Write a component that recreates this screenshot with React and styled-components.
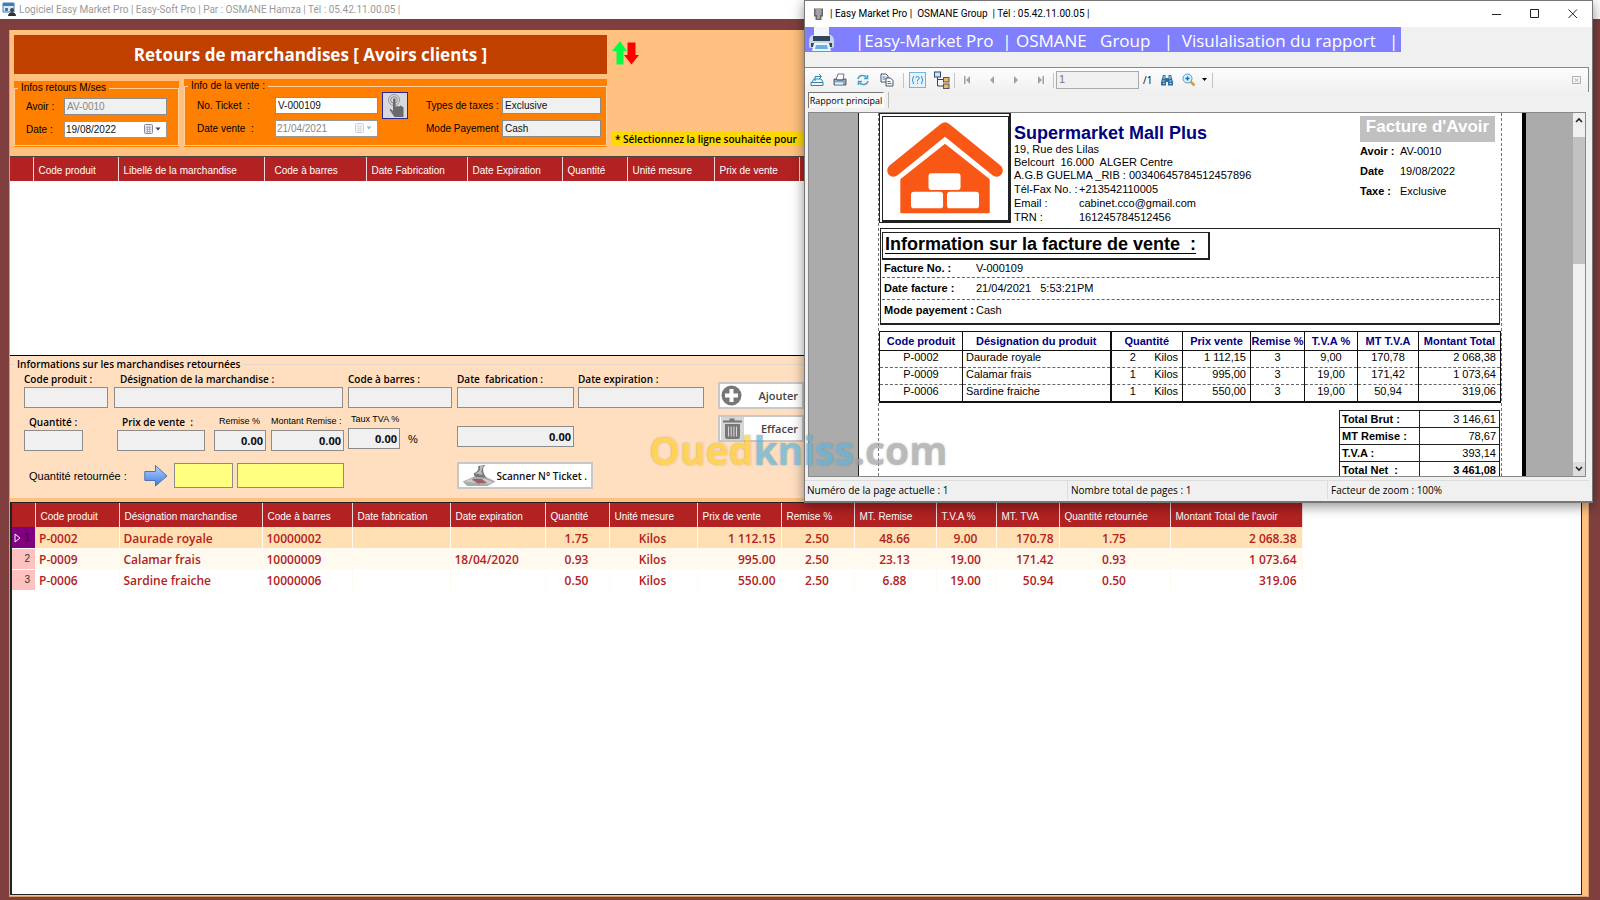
import { useState } from 'react'
import styled, { createGlobalStyle } from 'styled-components'

const ui = '"Open Sans", "Noto Sans", sans-serif'
const caption = 'Roboto, "Open Sans", sans-serif'
const sans = '"Liberation Sans", Arial, sans-serif'

const GlobalStyle = createGlobalStyle`
    * { box-sizing: border-box; }
    body { margin: 0; background: #7f3f3f; font-family: ${sans}; font-size: 11px; color: #000; }
    input, button { font-family: inherit; font-size: inherit; color: inherit; margin: 0; border-radius: 0; }
    table { border-collapse: collapse; table-layout: fixed; }
    fieldset { margin: 0; padding: 0; min-width: 0; }
`

/* ---------- main form ---------- */

const Desktop = styled.div`
    position: relative;
    min-height: 100vh;
    display: flex;
    flex-direction: column;
    overflow: hidden;
`

const AppTitle = styled.header`
    display: flex;
    align-items: center;
    gap: 3px;
    height: 19px;
    padding-left: 2px;
    background: #fff;
    color: #999;
    font: 10px/18px ${caption};
    white-space: pre;
`

const Form = styled.main`
    flex: 1;
    display: flex;
    flex-direction: column;
    margin: 11px 11px 3px 9px;
    border: 1px solid #d9a066;
    border-top: 0;
    background: #ffc080;
`

const FormHead = styled.section`
    display: flex;
    gap: 5px;
    height: 126px;
    padding: 5px 4px 0;
`

const HeadLeft = styled.div`
    display: flex;
    flex-direction: column;
    width: 593px;
    gap: 5px;
`

const Banner = styled.h1`
    margin: 0;
    height: 39px;
    background: #c04000;
    color: #fff;
    font: 700 17px/40px ${ui};
    text-align: center;
    white-space: pre;
`

const Groups = styled.div`
    display: grid;
    grid-template-columns: 165px 1fr;
    align-items: end;
    gap: 5px;
`

const Group = styled.div`
    background: #ff8000;
    padding-bottom: 1px;
`

const GroupBox = styled.fieldset`
    border: 1px solid #ffd0a0;
    legend {
        margin-left: 3px;
        padding: 0 3px;
        font-size: 10px;
        line-height: 14px;
        white-space: pre;
    }
`

const GroupGrid = styled.div`
    display: grid;
    grid-template-columns: ${p => p.$cols};
    grid-template-rows: 18px 17px;
    row-gap: 6px;
    align-items: center;
    padding: ${p => p.$pad};
    font-size: 10px;
    white-space: pre;
`

const TextBox = styled.input`
    width: 100%;
    height: ${p => p.$h || 17}px;
    padding: 0 2px;
    border: 1px solid #8c8c8c;
    outline: 0;
    background: ${p => p.$bg || '#f0f0f0'};
    color: ${p => p.$color || '#111'};
    font-family: ${p => p.$ui ? ui : sans};
    font-weight: ${p => p.$bold ? 700 : 400};
    text-align: ${p => p.$right ? 'right' : 'left'};
`

const DateBox = styled.div`
    display: flex;
    align-items: center;
    height: 17px;
    padding-right: 5px;
    border: 1px solid #999;
    background: #fff;
    input { flex: 1; min-width: 0; border: 0; padding: 0 1px; background: none; outline: 0; color: ${p => p.$off ? '#888' : '#111'}; }
    svg { opacity: ${p => p.$off ? .4 : 1}; }
`

const PickButton = styled.button`
    grid-area: 1 / 4;
    align-self: start;
    width: 26px;
    height: 27px;
    margin-top: -4px;
    padding: 0;
    border: 1px solid #2a2a90;
    background: #d8d8e0;
`

const HeadRight = styled.div`
    flex: 1;
    display: flex;
    flex-direction: column;
    justify-content: space-between;
    align-items: flex-start;
    padding: 6px 0 10px;
`

const Note = styled.div`
    width: 220px;
    padding-left: 3px;
    background: #ffd800;
    font: 600 10px/14px ${ui};
    white-space: nowrap;
`

const HeadGrid = styled.div`
    height: 200px;
    border-top: 1px solid #444;
    border-bottom: 1px solid #000;
    background: #fff;
`

const Th = styled.th`
    padding: 2px 0 0 ${p => p.$pad || 5}px;
    overflow: hidden;
    background: #b22222;
    border-right: 1px solid #f3d9d9;
    color: #fff;
    font-size: 10px;
    font-weight: 400;
    text-align: left;
    white-space: nowrap;
`

const SourceTable = styled.table`
    width: 100%;
    tr { height: 24px; }
`

/* ---------- returned goods ---------- */

const Returned = styled.section`
    height: 142px;
    padding-top: 1px;
    background: #ffdfc0;
`

const ReturnedBox = styled.fieldset`
    border: 0;
    border-top: 1px solid #e6d5c8;
    legend {
        margin-left: 5px;
        padding: 0 2px;
        font: 600 10px/15px ${ui};
    }
`

const ReturnedBody = styled.div`
    display: flex;
    gap: 14px;
    padding-left: 14px;
`

const Rows = styled.div`
    display: flex;
    flex-direction: column;
    width: 680px;
`

const FieldRow = styled.div`
    display: grid;
    grid-template-columns: ${p => p.$cols};
    align-items: end;
    height: ${p => p.$h}px;
`

const FieldWrap = styled.div`
    display: flex;
    flex-direction: column;
    margin-bottom: ${p => p.$up || 0}px;
    label {
        padding-left: ${p => p.$indent || 0}px;
        font: ${p => p.$small ? `9px/18px ${sans}` : `600 10px/15px ${ui}`};
        white-space: pre;
    }
`

const Percent = styled.span`
    margin-bottom: 6px;
    padding-left: 8px;
    font-size: 11px;
`

const ReturnRow = styled.div`
    display: grid;
    grid-template-columns: 120px 30px 59px 4px 107px 113px 137px;
    align-items: center;
    height: 37px;
    padding-top: 11px;
    label { padding-left: 5px; font-size: 11px; }
`

const Actions = styled.div`
    display: flex;
    flex-direction: column;
    gap: 6px;
    padding-top: 10px;
`

const ActionButton = styled.button`
    display: flex;
    align-items: center;
    justify-content: space-between;
    width: ${p => p.$w || 86}px;
    height: 27px;
    padding: 0 4px 0 1px;
    border: 2px solid #c8c8c8;
    background: #fff;
    color: ${p => p.$w ? '#111' : '#444'};
    font: 600 ${p => p.$w ? 10 : 11}px ${ui};
    white-space: nowrap;
`

const GridPanel = styled.section`
    flex: 1;
    margin: 4px 6px 1px 0;
    border: 1px solid #222;
    border-width: 1px 1px 1px 2px;
    background: #fff;
`

const ReturnTable = styled.table`
    width: 1290px;
    thead tr { height: 24px; }
    tbody tr { height: 21px; background: #fff; }
    tbody tr:nth-child(1) { background: #ffe0b3; }
    tbody tr:nth-child(2) { background: #fffaf0; }
    tbody th {
        padding: 0 5px 0 2px;
        background: #ffc0c0;
        border-bottom: 1px solid #fff;
        color: #333;
        font-size: 10px;
        font-weight: 400;
        text-align: right;
    }
    tbody tr:nth-child(1) th { background: #800080; color: #400040; }
`

const Td = styled.td`
    padding: 2px 5px 0 4px;
    border-right: 1px solid #fff9ef;
    color: #b22222;
    font: 600 12px/19px ${ui};
    text-align: ${p => p.$align || 'left'};
    white-space: nowrap;
`

const Marker = styled.svg`
    float: left;
    margin-top: 1px;
`

/* ---------- report window ---------- */

const Win = styled.section`
    position: absolute;
    top: 0;
    right: 7px;
    display: flex;
    flex-direction: column;
    width: 789px;
    height: 503px;
    border: 1px solid #777;
    border-bottom-width: 2px;
    background: #f0f0f0;
    box-shadow: 0 3px 12px rgba(0, 0, 0, .45);
`

const WinTitle = styled.header`
    display: flex;
    align-items: center;
    height: 26px;
    padding-left: 8px;
    background: #fff;
    font: 10px/24px ${caption};
    white-space: pre;
    span { flex: 1; padding-left: 6px; }
`

const WinButton = styled.button`
    display: flex;
    align-items: center;
    justify-content: center;
    width: 38px;
    height: 24px;
    padding: 0;
    border: 0;
    background: none;
`

const Band = styled.div`
    display: flex;
    width: 596px;
    height: 25px;
    padding-left: 3px;
    background: #8080ff;
    color: #fff;
    font: 17px/28px ${ui};
    white-space: pre;
    span { padding-left: 20px; }
`

const Toolbar = styled.div`
    display: flex;
    align-items: center;
    height: 25px;
    margin: 15px 3px 0 0;
    padding: 0 4px;
    border-top: 1px solid #888;
    border-right: 1px solid #888;
    background: linear-gradient(#fdfdfd, #f0f0f0);
`

const Tool = styled.button`
    display: flex;
    align-items: center;
    justify-content: center;
    width: ${p => p.$w || 24}px;
    height: 22px;
    padding: 0;
    border: 0;
    background: none;
    color: #a0a0a0;
`

const Sep = styled.i`
    width: 1px;
    height: 15px;
    margin: 0 1px;
    background: #c4c4c4;
`

const PageBox = styled.input`
    width: 83px;
    height: 18px;
    margin-left: 1px;
    padding: 0 2px 3px;
    border: 1px solid #aaa;
    background: #f0f0f0;
    && { color: #777; }
`

const PageCount = styled.span`
    width: 16px;
    padding-left: 4px;
    font: 10px ${ui};
`

const Tabs = styled.div`
    display: flex;
    height: 20px;
    padding-left: 3px;
    align-items: flex-start;
    button {
        width: 76px;
        height: 16px;
        padding: 0;
        border: 0;
        border-top: 1px solid #777;
        border-left: 1px solid #777;
        border-right: 1px solid #fff;
        background: #f8f8f8;
        font: 9px/15px ${ui};
        white-space: nowrap;
    }
    i { width: 1px; height: 16px; margin-left: 4px; background: #bbb; }
`

const Viewer = styled.div`
    display: flex;
    height: 365px;
    margin: 0 6px 0 3px;
    border: 1px solid #888;
    background: #ababab;
    overflow: hidden;
`

const Sheet = styled.article`
    flex: 1;
    margin: 0 47px 0 49px;
    padding: 0 20px 0 19px;
    border-left: 1px solid #222;
    border-right: 4px solid #000;
    background: #fff;
`

const SheetBody = styled.div`
    height: 100%;
    border: 0 dashed #777;
    border-width: 0 1px;
`

const ScrollBar = styled.div`
    display: flex;
    flex-direction: column;
    width: 14px;
    background: #f0f0f0;
    button { height: 14px; padding: 0; border: 0; background: #eee; line-height: 0; }
    i { height: 127px; margin-top: 10px; background: #c2c2c2; }
    button:last-child { margin-top: auto; background: #ddd; }
`

const Letterhead = styled.div`
    display: flex;
    height: 114px;
`

const LogoFrame = styled.div`
    flex: none;
    width: 132px;
    height: 110px;
    padding: 2px;
    border: 1px solid #222;
    border-right-width: 2px;
    svg { display: block; border: 1px solid #222; border-bottom-width: 2px; }
`

const Company = styled.div`
    flex: 1;
    min-width: 0;
    padding: 11px 0 0 3px;
    line-height: 13px;
    white-space: pre;
    h2 { margin: 0 0 1px; color: #000080; font-size: 18px; line-height: 18px; }
    dl { display: grid; grid-template-columns: 65px 1fr; row-gap: 1px; margin: 1px 0 0; }
    dt, dd { margin: 0; }
`

const Credit = styled.div`
    flex: none;
    width: 135px;
    margin: 3px 6px 0 0;
    h2 { margin: 0 0 -1px; height: 26px; background: #c0c0c0; color: #fff; font-size: 17px; line-height: 21px; text-align: center; }
    dl { display: grid; grid-template-columns: 40px 1fr; margin: 0; line-height: 20px; }
    dt { font-weight: 700; }
    dd { margin: 0; }
`

const InvoiceBox = styled.section`
    height: 97px;
    margin: 1px 1px 0;
    padding: 3px 0 0 1px;
    border: 1px solid #222;
    border-bottom-width: 2px;
    h3 {
        width: 328px;
        height: 28px;
        margin: 0;
        padding-left: 2px;
        border: 1px solid #222;
        border-width: 1px 2px 2px 1px;
        font-size: 18px;
        line-height: 22px;
        text-decoration: underline;
        text-underline-offset: 3px;
        white-space: pre;
    }
`

const InvoiceLine = styled.div`
    display: grid;
    grid-template-columns: 92px 1fr;
    align-items: center;
    height: ${p => p.$h || 20}px;
    padding-left: 2px;
    border-bottom: ${p => p.$last ? 0 : '1px dashed #666'};
    line-height: 17px;
    white-space: pre;
`

const ItemTable = styled.table`
    width: 100%;
    margin-top: 6px;
    border: 1px solid #111;
    border-width: 1px 1px 2px;
    th { height: 19px; padding: 0; border: 1px solid #111; color: #000080; font-size: 11px; white-space: nowrap; }
    td { height: 17px; padding: 0 4px 4px; border: 1px solid #111; border-top: 0; border-bottom: 1px dashed #666; line-height: 12px; text-align: center; white-space: pre; }
    td:nth-child(2) { text-align: left; padding-left: 3px; }
    td:nth-child(4), td:nth-child(8) { text-align: right; }
    td:nth-child(3) { text-align: right; border-left-width: 2px; }
    th:nth-child(3) { border-left-width: 2px; }
`

const TotalTable = styled.table`
    width: 161px;
    margin: 7px 1px 0 auto;
    th, td { height: 17px; padding: 0 3px 0 2px; border: 1px solid #222; font-size: 11px; white-space: pre; }
    th { text-align: left; }
    td { text-align: right; }
    tr:last-child td { font-weight: 700; }
`

const Status = styled.footer`
    display: grid;
    grid-template-columns: 262px 260px 1fr;
    margin: 3px 3px 0 0;
    font: 10px/18px ${ui};
    border-top: 1px solid #ddd;
    span { padding-left: 2px; }
    span + span { border-left: 1px solid #ddd; padding-left: 3px; }
`

const Watermark = styled.div`
    position: absolute;
    top: 422px;
    left: 649px;
    opacity: .72;
    color: #ffcf33;
    font: 700 39px/56px ${ui};
    text-shadow: 0 0 2px rgba(90, 90, 90, .5);
    pointer-events: none;
    span { color: #62b4d8; }
    em { color: #a0a0a0; font-style: normal; }
`

/* ---------- icons ---------- */

const AppIcon = () => (
    <svg width="14" height="15" viewBox="0 0 14 15">
        <path d="M1 1h11v9H1z" fill="#d7ecf8" stroke="#3f7fb5" />
        <path d="M1 1h11v3H1z" fill="#3f7fb5" />
        <path d="M3 6h3v3H3z" fill="#3f7fb5" />
        <circle cx="10" cy="8" r="2" fill="#444" />
        <path d="M6 14c0-5 8-5 8 0z" fill="#333" />
    </svg>
)

const CalendarIcon = () => (
    <svg width="17" height="11" viewBox="0 0 17 11">
        <rect x=".5" y=".5" width="8" height="9" rx="1" fill="#e4e8ee" stroke="#889" />
        <path d="M2 3.500h5M2 5.500h5M2 7.500h5M3.500 2v7M5.500 2v7" stroke="#99a" strokeWidth=".6" />
        <path d="M11.500 3.500h5l-2.500 3z" fill="#345" />
    </svg>
)

const HandIcon = () => (
    <svg width="24" height="25" viewBox="0 0 24 25">
        <circle cx="11" cy="7" r="5.500" fill="none" stroke="#888" strokeWidth=".8" />
        <circle cx="11" cy="7" r="3.300" fill="none" stroke="#777" strokeWidth=".8" />
        <path d="M10 6q1.300-1.500 2.500 0v8l1.500-1 2 .5 1.500-1 1.800 1 1.200 1v9.500h-9L7 17.500q-1-2 .8-1.500L10 18z" fill="#6a6a6a" />
    </svg>
)

const SwapIcon = () => (
    <svg width="27" height="24" viewBox="0 0 27 24">
        <path d="M8 0l7 10h-3.500v13.500h-7V10H0z" fill="#0f4" />
        <path d="M15.500 1.500h8V14H27l-7.500 9.500L12 14h3.500z" fill="#f00" />
    </svg>
)

const BlueArrow = () => (
    <svg width="24" height="24" viewBox="0 0 24 24">
        <defs>
            <linearGradient id="arrow" x2="0" y2="1">
                <stop offset="0" stopColor="#b4d4ff" />
                <stop offset="1" stopColor="#3f7ce0" />
            </linearGradient>
        </defs>
        <path d="M.8 7.500h10.700V1.500L23 12 11.500 22v-5.500H.8z" fill="url(#arrow)" stroke="#4a74b8" />
    </svg>
)

const PlusIcon = () => (
    <svg width="21" height="21" viewBox="0 0 21 21">
        <circle cx="10.500" cy="10.500" r="10" fill="#777" />
        <path d="M8.500 4h4v4.500H17v4h-4.500V17h-4v-4.500H4v-4h4.500z" fill="#fff" />
    </svg>
)

const TrashIcon = () => (
    <svg width="23" height="23" viewBox="0 0 23 23">
        <rect width="23" height="23" fill="#d6d6d6" />
        <path d="M2 3.500h6.500V1.500h5v2H21v2H2zM4 7h15v13q0 2-2 2H6q-2 0-2-2z" fill="#777" />
        <path d="M7.500 9.500v10M10.200 9.500v10M12.900 9.500v10M15.500 9.500v10" stroke="#d6d6d6" strokeWidth="1.100" />
    </svg>
)

const ScannerIcon = () => (
    <svg width="40" height="23" viewBox="0 0 40 23">
        <path d="M3 18l12-5h13l11 5-9 5H8z" fill="#aaa" />
        <path d="M5 18l10-4 12 1 9 4-6 2z" fill="#ccc" />
        <path d="M13 15l11 0 6 5H19z" fill="#b06068" />
        <path d="M15 15l10 5M18 15l9 5M13 16l9 5" stroke="#666" strokeWidth=".6" />
        <path d="M15 9q6-2 5-8l8-1q-5 4-1 11l2 3-13-1z" fill="#777" />
        <path d="M16 9q7-1 6-8h4q-4 5-1 10z" fill="#bbb" />
    </svg>
)

const DeviceIcon = () => (
    <svg width="11" height="13" viewBox="0 0 11 13">
        <path d="M1 .5h9v8H8.500V12h-6V8.500H1z" fill="#666" />
        <path d="M2.500 2h6M2.500 4h6M2.500 6h6M4 8h3M4 10h3" stroke="#ddd" />
    </svg>
)

const PrinterIcon = () => (
    <svg width="27" height="25" viewBox="0 0 27 25">
        <path d="M6 0h15v11H6z" fill="#f2f6fa" />
        <path d="M4 8h2v4h15V8h2q3 2 3 6v5q0 2-2 2H3q-2 0-2-2v-5q0-4 3-6z" fill="#c9d5e0" />
        <path d="M5 9h17v5H5zM3 16h21v4H3z" fill="#32455e" />
        <path d="M6 16h15l2 8H4z" fill="#eaf6ff" />
        <path d="M8 18h11l1 4H7z" fill="#64b0e4" />
    </svg>
)

const ExportIcon = () => (
    <svg width="14" height="14" viewBox="0 0 14 14" fill="none" stroke="#2d86ad">
        <path d="M1 9.500h12v3H1zM2 9l2-3h7l2 3" />
        <path d="M5 8V3.500h6M9 1l2.500 2.500L9 6" />
    </svg>
)

const SmallPrinter = () => (
    <svg width="14" height="14" viewBox="0 0 14 14">
        <path d="M5 1h6l-1 6H3z" fill="#fff" stroke="#456" strokeWidth=".8" />
        <path d="M1 6h2l1 1h6l.5-1H13v6H1z" fill="#8ea9c4" stroke="#345" strokeWidth=".8" />
        <path d="M2 9.500h8v2H2z" fill="#e7f2fb" />
    </svg>
)

const RefreshIcon = () => (
    <svg width="12" height="12" viewBox="0 0 12 12" fill="none" stroke="#4a9fc4" strokeWidth="1.500">
        <path d="M1 5q1-4 5-3.500 2 0 3.500 2M11 7q-1 4-5 3.500-2 0-3.500-2" />
        <path d="M10.500 1v3.500H7M1.500 11V7.500H5" />
    </svg>
)

const CopyIcon = () => (
    <svg width="14" height="14" viewBox="0 0 14 14" fill="#f7fbff" stroke="#345" strokeWidth=".9">
        <path d="M1 1h5l2 2v6H1z" />
        <path d="M6 5h4.500l2.500 2.500V13H6z" />
        <path d="M2.500 4h3M2.500 6h3M7.500 8.500h3M7.500 10.500h4" stroke="#369" />
    </svg>
)

const HelpIcon = () => (
    <svg width="17" height="16" viewBox="0 0 17 16" fill="none" stroke="#3a8fc4">
        <rect x=".5" y=".5" width="16" height="15" fill="#e3f2fc" stroke="#72b5dd" />
        <path d="M4.500 4q-2 4 0 8M12.500 4q2 4 0 8M6.800 6q.2-1.500 1.700-1.500t1.700 1.500-1.700 2v1.500M8.500 10.800v1.200" />
    </svg>
)

const TreeIcon = () => (
    <svg width="17" height="18" viewBox="0 0 17 18">
        <path d="M4.500 5v10H11M4.500 8.500H11" fill="none" stroke="#345" />
        <rect x="1.500" y="1" width="6" height="5" fill="#cfe4f6" stroke="#347" />
        <rect x="10.500" y="6.500" width="5.500" height="4.500" fill="#f2b36a" stroke="#555" />
        <rect x="10.500" y="13" width="5.500" height="4.500" fill="#f2b36a" stroke="#555" />
    </svg>
)

const NavIcon = ({ bar, flip }) => (
    <svg width="8" height="8" viewBox="0 0 8 8" fill="currentColor">
        <g transform={flip ? 'matrix(-1 0 0 1 8 0)' : undefined}>
            <path d="M6 0v8L2 4z" />
            {bar && <path d="M0 0h1.500v8H0z" />}
        </g>
    </svg>
)

const BinocularIcon = () => (
    <svg width="12" height="12" viewBox="0 0 12 12">
        <path d="M2 1h2.500v3h3V1H10l2 7v3.500H7V8H5v3.500H0V8z" fill="#2d6fa3" />
        <path d="M1.500 7h2M8.500 7h2M3 2v3M9 2v3M2 9.500h1.500M8.500 9.500h2" stroke="#b7e2f7" />
    </svg>
)

const MagnifierIcon = () => (
    <svg width="14" height="14" viewBox="0 0 14 14" fill="none">
        <path d="M8 8l4.500 4.500" stroke="#d79a4a" strokeWidth="2.500" />
        <circle cx="5.500" cy="5.500" r="4.500" fill="#d8f0ff" stroke="#4a9cd0" />
        <path d="M5.500 3.500v4M3.500 5.500h4" stroke="#1c6fae" strokeWidth="1.500" />
    </svg>
)

const House = () => (
    <svg width="127" height="106" viewBox="0 0 127 106">
        <path d="M17 61L63 25l46 36v37q0 1-1 1H18q-1 0-1-1z" fill="#f95716" />
        <path d="M10 58L63 16l53 42" fill="none" stroke="#fff" strokeWidth="18" strokeLinejoin="miter" />
        <path d="M10 55L63 12l53 43" fill="none" stroke="#f95716" strokeWidth="13" strokeLinecap="round" strokeLinejoin="round" />
        <rect x="46" y="58" width="33" height="17" rx="3" fill="#fff" />
        <rect x="28" y="77" width="33" height="17" rx="3" fill="#fff" />
        <rect x="65" y="77" width="33" height="17" rx="3" fill="#fff" />
    </svg>
)

const Chevron = ({ down }) => (
    <svg width="8" height="6" viewBox="0 0 8 6">
        <path d={down ? 'M1 1l3 3 3-3' : 'M1 5l3-3 3 3'} fill="none" stroke="#222" strokeWidth="1.600" />
    </svg>
)

/* ---------- data ---------- */

const sourceCols = [
    [23, ''], [85, 'Code produit'], [146, 'Libellé de la marchandise'], [102, 'Code à barres', 10],
    [101, 'Date Fabrication'], [95, 'Date Expiration'], [65, 'Quantité'], [87, 'Unité mesure'], [85, 'Prix de vente'], [0, '']
]

const returnCols = [
    [23, ''], [84, 'Code produit'], [143, 'Désignation marchandise'], [90, 'Code à barres'], [98, 'Date fabrication'],
    [95, 'Date expiration'], [64, 'Quantité'], [88, 'Unité mesure'], [84, 'Prix de vente'], [73, 'Remise %'],
    [82, 'MT. Remise'], [60, 'T.V.A %'], [63, 'MT. TVA'], [111, 'Quantité retournée'], [132, "Montant Total de l'avoir"]
]

const aligns = ['left', 'left', 'left', 'left', 'left', 'center', 'center', 'right', 'center', 'center', 'center', 'right', 'center', 'right']

const returns = [
    ['P-0002', 'Daurade royale', '10000002', '', '', '1.75', 'Kilos', '1 112.15', '2.50', '48.66', '9.00', '170.78', '1.75', '2 068.38'],
    ['P-0009', 'Calamar frais', '10000009', '', '18/04/2020', '0.93', 'Kilos', '995.00', '2.50', '23.13', '19.00', '171.42', '0.93', '1 073.64'],
    ['P-0006', 'Sardine fraiche', '10000006', '', '', '0.50', 'Kilos', '550.00', '2.50', '6.88', '19.00', '50.94', '0.50', '319.06']
]

const itemCols = [
    [83, 'Code produit'], [148, 'Désignation du produit'], [72, 'Quantité'], [68, 'Prix vente'],
    [54, 'Remise %'], [53, 'T.V.A %'], [61, 'MT T.V.A'], [82, 'Montant Total']
]

const items = [
    ['P-0002', 'Daurade royale', '2      Kilos', '1 112,15', '3', '9,00', '170,78', '2 068,38'],
    ['P-0009', 'Calamar frais', '1      Kilos', '995,00', '3', '19,00', '171,42', '1 073,64'],
    ['P-0006', 'Sardine fraiche', '1      Kilos', '550,00', '3', '19,00', '50,94', '319,06']
]

const totals = [['Total Brut :', '3 146,61'], ['MT Remise :', '78,67'], ['T.V.A :', '393,14'], ['Total Net  :', '3 461,08']]

/* ---------- parts ---------- */

const Cols = ({ cols }) => (
    <colgroup>{cols.map(([w], i) => <col key={i} style={w ? { width: w } : undefined} />)}</colgroup>
)

const HeaderRow = ({ cols }) => (
    <thead><tr>{cols.map(([, name, pad], i) => <Th key={i} $pad={pad}>{name}</Th>)}</tr></thead>
)

const Field = ({ id, label, value = '', indent, small, up }) => (
    <FieldWrap $indent={indent} $small={small} $up={up}>
        {label && <label htmlFor={id}>{label}</label>}
        <TextBox id={id} aria-label={label ? undefined : 'Montant'} $h={21} $ui $bold $right defaultValue={value} />
    </FieldWrap>
)

const ReportWindow = () => (
    <Win>
        <WinTitle>
            <DeviceIcon />
            <span>| Easy Market Pro |  OSMANE Group  | Tél : 05.42.11.00.05 |</span>
            <WinButton aria-label="Réduire"><svg width="10" height="10"><path d="M0 5.500h9" stroke="#222" /></svg></WinButton>
            <WinButton aria-label="Agrandir"><svg width="10" height="10"><path d="M.5.5h8v8h-8z" fill="none" stroke="#222" /></svg></WinButton>
            <WinButton aria-label="Fermer"><svg width="10" height="10"><path d="M.5.5l8.500 8.500M9 .5L.5 9" stroke="#222" /></svg></WinButton>
        </WinTitle>
        <Band>
            <PrinterIcon />
            <span>|Easy-Market Pro  | OSMANE   Group   |  Visulalisation du rapport   |</span>
        </Band>
        <Toolbar>
            <Tool $w={16} aria-label="Exporter"><ExportIcon /></Tool>
            <Tool $w={30} aria-label="Imprimer"><SmallPrinter /></Tool>
            <Tool $w={16} aria-label="Actualiser"><RefreshIcon /></Tool>
            <Tool $w={31} aria-label="Copier"><CopyIcon /></Tool>
            <Sep />
            <Tool aria-label="Aide"><HelpIcon /></Tool>
            <Tool aria-label="Arborescence"><TreeIcon /></Tool>
            <Sep />
            <Tool aria-label="Première page"><NavIcon bar /></Tool>
            <Tool aria-label="Page précédente"><NavIcon /></Tool>
            <Tool aria-label="Page suivante"><NavIcon flip /></Tool>
            <Tool aria-label="Dernière page"><NavIcon bar flip /></Tool>
            <Sep />
            <PageBox aria-label="Page" defaultValue="1" />
            <PageCount>/1</PageCount>
            <Tool aria-label="Rechercher"><BinocularIcon /></Tool>
            <Tool $w={32} aria-label="Zoom">
                <MagnifierIcon />
                <svg width="12" height="4"><path d="M6 0h5L8.500 3z" fill="#000" /></svg>
            </Tool>
            <Sep />
            <CloseView aria-label="Fermer la vue">
                <svg width="9" height="8"><path d="M.5.5h8v7h-8zM2.500 2.500l4 3.500M6.500 2.500l-4 3.500" fill="none" stroke="#b0b0b0" /></svg>
            </CloseView>
        </Toolbar>
        <Tabs><button>Rapport principal</button><i /></Tabs>
        <Viewer>
            <Sheet>
                <SheetBody>
                    <Letterhead>
                        <LogoFrame><House /></LogoFrame>
                        <Company>
                            <h2>Supermarket Mall Plus</h2>
                            <div>19, Rue des Lilas</div>
                            <div>Belcourt  16.000  ALGER Centre</div>
                            <div>A.G.B GUELMA _RIB : 00340645784512457896</div>
                            <dl>
                                <dt>Tél-Fax No. :</dt><dd>+213542110005</dd>
                                <dt>Email :</dt><dd>cabinet.cco@gmail.com</dd>
                                <dt>TRN :</dt><dd>161245784512456</dd>
                            </dl>
                        </Company>
                        <Credit>
                            <h2>Facture d'Avoir</h2>
                            <dl>
                                <dt>Avoir :</dt><dd>AV-0010</dd>
                                <dt>Date</dt><dd>19/08/2022</dd>
                                <dt>Taxe :</dt><dd>Exclusive</dd>
                            </dl>
                        </Credit>
                    </Letterhead>
                    <InvoiceBox>
                        <h3>Information sur la facture de vente  :</h3>
                        <InvoiceLine $h={18}><b>Facture No. :</b><span>V-000109</span></InvoiceLine>
                        <InvoiceLine $h={22}><b>Date facture :</b><span>21/04/2021   5:53:21PM</span></InvoiceLine>
                        <InvoiceLine $last><b>Mode payement :</b><span>Cash</span></InvoiceLine>
                    </InvoiceBox>
                    <ItemTable>
                        <Cols cols={itemCols} />
                        <thead><tr>{itemCols.map(([, name]) => <th key={name}>{name}</th>)}</tr></thead>
                        <tbody>
                            {items.map(row => <tr key={row[0]}>{row.map((cell, i) => <td key={i}>{cell}</td>)}</tr>)}
                        </tbody>
                    </ItemTable>
                    <TotalTable>
                        <tbody>
                            {totals.map(([name, value]) => <tr key={name}><th>{name}</th><td>{value}</td></tr>)}
                        </tbody>
                    </TotalTable>
                </SheetBody>
            </Sheet>
            <ScrollBar>
                <button aria-label="Défiler vers le haut"><Chevron /></button>
                <i />
                <button aria-label="Défiler vers le bas"><Chevron down /></button>
            </ScrollBar>
        </Viewer>
        <Status>
            <span>Numéro de la page actuelle : 1</span>
            <span>Nombre total de pages : 1</span>
            <span>Facteur de zoom : 100%</span>
        </Status>
    </Win>
)

const CloseView = styled(Tool)`
    width: 16px;
    margin-left: auto;
`

const App = () => {
    const [ticket, setTicket] = useState('V-000109'),
        [date, setDate] = useState('19/08/2022')

    return (
        <Desktop>
            <GlobalStyle />
            <AppTitle><AppIcon />Logiciel Easy Market Pro | Easy-Soft Pro | Par : OSMANE Hamza | Tél : 05.42.11.00.05 |</AppTitle>
            <Form>
                <FormHead>
                    <HeadLeft>
                        <Banner>Retours de marchandises [ Avoirs clients ]</Banner>
                        <Groups>
                            <Group>
                                <GroupBox>
                                    <legend>Infos retours M/ses</legend>
                                    <GroupGrid $cols="38px 103px" $pad="2px 0 7px 11px">
                                        <label htmlFor="avoir">Avoir :</label>
                                        <TextBox id="avoir" $color="#888" readOnly value="AV-0010" />
                                        <label htmlFor="date">Date :</label>
                                        <DateBox><input id="date" value={date} onChange={e => setDate(e.target.value)} /><CalendarIcon /></DateBox>
                                    </GroupGrid>
                                </GroupBox>
                            </Group>
                            <Group>
                                <GroupBox>
                                    <legend>Info de la vente :</legend>
                                    <GroupGrid $cols="78px 103px 4px 26px 18px 76px 99px" $pad="3px 0 8px 12px">
                                        <label htmlFor="ticket">No. Ticket  :</label>
                                        <TextBox id="ticket" $bg="#fff" value={ticket} onChange={e => setTicket(e.target.value)} />
                                        <PickButton aria-label="Choisir un ticket"><HandIcon /></PickButton>
                                        <i /><i />
                                        <label htmlFor="taxe">Types de taxes :</label>
                                        <TextBox id="taxe" readOnly value="Exclusive" />
                                        <label htmlFor="dateVente">Date vente  :</label>
                                        <DateBox $off><input id="dateVente" readOnly value="21/04/2021" /><CalendarIcon /></DateBox>
                                        <i /><i /><i />
                                        <label htmlFor="mode">Mode Payement</label>
                                        <TextBox id="mode" readOnly value="Cash" />
                                    </GroupGrid>
                                </GroupBox>
                            </Group>
                        </Groups>
                    </HeadLeft>
                    <HeadRight>
                        <SwapIcon />
                        <Note>* Sélectionnez la ligne souhaitée pour</Note>
                    </HeadRight>
                </FormHead>
                <HeadGrid>
                    <SourceTable><Cols cols={sourceCols} /><HeaderRow cols={sourceCols} /></SourceTable>
                </HeadGrid>
                <Returned>
                    <ReturnedBox>
                        <legend>Informations sur les marchandises retournées</legend>
                        <ReturnedBody>
                            <Rows>
                                <FieldRow $h={36} $cols="84px 6px 229px 5px 104px 5px 117px 4px 126px">
                                    <Field id="code" label="Code produit :" /><i />
                                    <Field id="designation" label="Désignation de la marchandise :" indent={6} /><i />
                                    <Field id="barres" label="Code à barres :" /><i />
                                    <Field id="fabrication" label="Date  fabrication :" /><i />
                                    <Field id="expiration" label="Date expiration :" />
                                </FieldRow>
                                <FieldRow $h={43} $cols="59px 34px 88px 9px 52px 5px 73px 4px 52px 57px 117px">
                                    <Field id="quantite" label="Quantité :" indent={5} /><i />
                                    <Field id="prix" label="Prix de vente  :" indent={5} /><i />
                                    <Field id="remise" label="Remise %" small value="0.00" indent={5} /><i />
                                    <Field id="montant" label="Montant Remise :" small value="0.00" /><i />
                                    <Field id="tva" label="Taux TVA %" small value="0.00" indent={3} up={2} />
                                    <Percent>%</Percent>
                                    <Field id="total" value="0.00" up={4} />
                                </FieldRow>
                                <ReturnRow>
                                    <label htmlFor="retour">Quantité retournée :</label>
                                    <BlueArrow />
                                    <TextBox id="retour" $h={25} $bg="#ffff80" /><i />
                                    <TextBox aria-label="Unité" $h={25} $bg="#ffff80" /><i />
                                    <ActionButton $w={136}><ScannerIcon />Scanner N° Ticket .</ActionButton>
                                </ReturnRow>
                            </Rows>
                            <Actions>
                                <ActionButton><PlusIcon />Ajouter</ActionButton>
                                <ActionButton><TrashIcon />Effacer</ActionButton>
                            </Actions>
                        </ReturnedBody>
                    </ReturnedBox>
                </Returned>
                <GridPanel>
                    <ReturnTable>
                        <Cols cols={returnCols} />
                        <HeaderRow cols={returnCols} />
                        <tbody>
                            {returns.map((row, r) => (
                                <tr key={row[0]}>
                                    <th scope="row">
                                        {r === 0 && <Marker width="7" height="10"><path d="M1 1l5 4-5 4z" fill="none" stroke="#fff" /></Marker>}
                                        {r + 1}
                                    </th>
                                    {row.map((cell, i) => <Td key={i} $align={aligns[i]}>{cell}</Td>)}
                                </tr>
                            ))}
                        </tbody>
                    </ReturnTable>
                </GridPanel>
            </Form>
            <ReportWindow />
            <Watermark>Oued<span>kniss</span><em>.com</em></Watermark>
        </Desktop>
    )
}

export default App
